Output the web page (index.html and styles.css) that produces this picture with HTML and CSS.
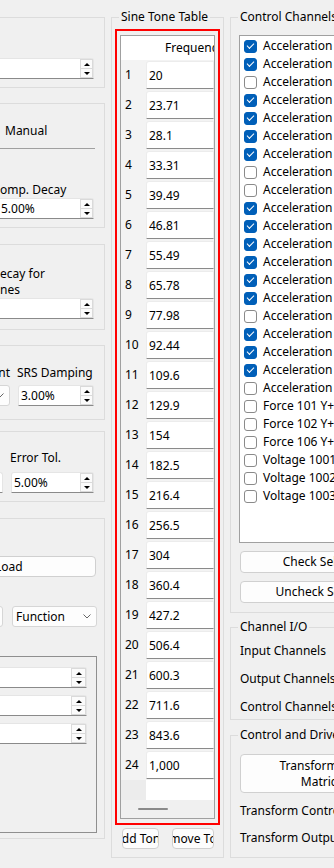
FILE: index.html
```html
<!DOCTYPE html>
<html lang="en">
<head>
    <meta charset="UTF-8">
    <title>Sine Tone Setup</title>
    <link rel="stylesheet" href="styles.css">
</head>
<body>
<div class="window">

    <!-- left column, cut off by the window edge -->
    <div class="col-left">
        <div class="lgroup g1">
            <div class="spin wide">
                <span class="spin-text"></span>
                <span class="spin-btns"><span class="sb up"></span><span class="sb down"></span></span>
            </div>
        </div>

        <div class="lgroup g2">
            <div class="tabline"><span class="tab">Manual</span></div>
            <div class="lbl l-decay">omp. Decay</div>
            <div class="spin wide s-decay">
                <span class="spin-text t-clip">5.00%</span>
                <span class="spin-btns"><span class="sb up"></span><span class="sb down"></span></span>
            </div>
        </div>

        <div class="lgroup g3">
            <div class="lbl l-tones">ecay for<br>nes</div>
            <div class="spin wide s-tones">
                <span class="spin-text"></span>
                <span class="spin-btns"><span class="sb up"></span><span class="sb down"></span></span>
            </div>
        </div>

        <div class="lgroup g4">
            <div class="pair-row l-srs">
                <span class="c1 lbl-r">nt</span>
                <span class="c2 lbl">SRS Damping</span>
            </div>
            <div class="pair-row r-srs">
                <div class="c1 combo"><span class="combo-text"></span><svg class="chev" width="8" height="5" viewBox="0 0 8 5"><path d="M.5 .5 4 4 7.5 .5" stroke="#666" fill="none"/></svg></div>
                <div class="c2 spin">
                    <span class="spin-text">3.00%</span>
                    <span class="spin-btns"><span class="sb up"></span><span class="sb down"></span></span>
                </div>
            </div>
        </div>

        <div class="lgroup g5">
            <div class="pair-row l-err">
                <span class="c1"></span>
                <span class="c2 lbl">Error Tol.</span>
            </div>
            <div class="pair-row r-err">
                <div class="c1 spin"><span class="spin-text"></span></div>
                <div class="c2 spin">
                    <span class="spin-text">5.00%</span>
                    <span class="spin-btns"><span class="sb up"></span><span class="sb down"></span></span>
                </div>
            </div>
        </div>

        <div class="lgroup g6">
            <button class="btn b-load">Load</button>
            <div class="pair-row r-func">
                <div class="c1 combo"><span class="combo-text"></span><svg class="chev" width="8" height="5" viewBox="0 0 8 5"><path d="M.5 .5 4 4 7.5 .5" stroke="#666" fill="none"/></svg></div>
                <div class="c2 combo"><span class="combo-text">Function</span><svg class="chev" width="8" height="5" viewBox="0 0 8 5"><path d="M.5 .5 4 4 7.5 .5" stroke="#666" fill="none"/></svg></div>
            </div>
            <div class="frame">
                <div class="spin fspin"><span class="spin-text"></span><span class="spin-btns"><span class="sb up"></span><span class="sb down"></span></span></div>
                <div class="spin fspin"><span class="spin-text"></span><span class="spin-btns"><span class="sb up"></span><span class="sb down"></span></span></div>
                <div class="spin fspin"><span class="spin-text"></span><span class="spin-btns"><span class="sb up"></span><span class="sb down"></span></span></div>
            </div>
        </div>
    </div>

    <!-- sine tone table -->
    <div class="col-mid">
        <div class="group g-table">
            <div class="group-title">Sine Tone Table</div>
            <div class="highlight">
                <div class="table">
                    <div class="corner"></div>
                    <div class="col-head">Frequency (Hz)</div>
                    <div class="rh">1</div><div class="cell"><span>20</span></div>
                    <div class="rh">2</div><div class="cell"><span>23.71</span></div>
                    <div class="rh">3</div><div class="cell"><span>28.1</span></div>
                    <div class="rh">4</div><div class="cell"><span>33.31</span></div>
                    <div class="rh">5</div><div class="cell"><span>39.49</span></div>
                    <div class="rh">6</div><div class="cell"><span>46.81</span></div>
                    <div class="rh">7</div><div class="cell"><span>55.49</span></div>
                    <div class="rh">8</div><div class="cell"><span>65.78</span></div>
                    <div class="rh">9</div><div class="cell"><span>77.98</span></div>
                    <div class="rh">10</div><div class="cell"><span>92.44</span></div>
                    <div class="rh">11</div><div class="cell"><span>109.6</span></div>
                    <div class="rh">12</div><div class="cell"><span>129.9</span></div>
                    <div class="rh">13</div><div class="cell"><span>154</span></div>
                    <div class="rh">14</div><div class="cell"><span>182.5</span></div>
                    <div class="rh">15</div><div class="cell"><span>216.4</span></div>
                    <div class="rh">16</div><div class="cell"><span>256.5</span></div>
                    <div class="rh">17</div><div class="cell"><span>304</span></div>
                    <div class="rh">18</div><div class="cell"><span>360.4</span></div>
                    <div class="rh">19</div><div class="cell"><span>427.2</span></div>
                    <div class="rh">20</div><div class="cell"><span>506.4</span></div>
                    <div class="rh">21</div><div class="cell"><span>600.3</span></div>
                    <div class="rh">22</div><div class="cell"><span>711.6</span></div>
                    <div class="rh">23</div><div class="cell"><span>843.6</span></div>
                    <div class="rh">24</div><div class="cell"><span>1,000</span></div>
                    <div class="rh empty"></div><div class="blank"></div>
                    <div class="hscroll"><span class="handle"></span></div>
                </div>
            </div>
            <div class="tone-btns">
                <button class="btn b-add"><span>Add Tone</span></button>
                <button class="btn b-remove"><span>Remove Tone</span></button>
            </div>
        </div>
    </div>

    <!-- channels, cut off by the window edge -->
    <div class="col-right">
        <div class="group g-channels">
            <div class="group-title">Control Channels</div>
            <div class="list">
                <div class="item"><span class="cb on"></span>Acceleration 1 X+</div>
                <div class="item"><span class="cb on"></span>Acceleration 1 Y+</div>
                <div class="item"><span class="cb"></span>Acceleration 1 Z+</div>
                <div class="item"><span class="cb on"></span>Acceleration 2 X+</div>
                <div class="item"><span class="cb on"></span>Acceleration 2 Y+</div>
                <div class="item"><span class="cb on"></span>Acceleration 2 Z+</div>
                <div class="item"><span class="cb on"></span>Acceleration 3 X+</div>
                <div class="item"><span class="cb"></span>Acceleration 3 Y+</div>
                <div class="item"><span class="cb"></span>Acceleration 3 Z+</div>
                <div class="item"><span class="cb on"></span>Acceleration 4 X+</div>
                <div class="item"><span class="cb on"></span>Acceleration 4 Y+</div>
                <div class="item"><span class="cb on"></span>Acceleration 4 Z+</div>
                <div class="item"><span class="cb on"></span>Acceleration 5 X+</div>
                <div class="item"><span class="cb on"></span>Acceleration 5 Y+</div>
                <div class="item"><span class="cb on"></span>Acceleration 5 Z+</div>
                <div class="item"><span class="cb"></span>Acceleration 6 X+</div>
                <div class="item"><span class="cb on"></span>Acceleration 6 Y+</div>
                <div class="item"><span class="cb on"></span>Acceleration 6 Z+</div>
                <div class="item"><span class="cb on"></span>Acceleration 7 X+</div>
                <div class="item"><span class="cb"></span>Acceleration 7 Y+</div>
                <div class="item"><span class="cb"></span>Force 101 Y+</div>
                <div class="item"><span class="cb"></span>Force 102 Y+</div>
                <div class="item"><span class="cb"></span>Force 106 Y+</div>
                <div class="item"><span class="cb"></span>Voltage 1001</div>
                <div class="item"><span class="cb"></span>Voltage 1002</div>
                <div class="item"><span class="cb"></span>Voltage 1003</div>
            </div>
            <button class="btn b-wide b-check"><span>Check Selected</span></button>
            <button class="btn b-wide b-uncheck"><span>Uncheck Selected</span></button>
        </div>

        <div class="group g-io">
            <div class="group-title">Channel I/O</div>
            <div class="lbl io-1">Input Channels</div>
            <div class="lbl io-2">Output Channels</div>
            <div class="lbl io-3">Control Channels</div>
        </div>

        <div class="group g-drive">
            <div class="group-title">Control and Drive</div>
            <button class="btn b-wide b-matrix"><span>Transform Drive<br>Matrices</span></button>
            <div class="lbl dr-1">Transform Control</div>
            <div class="lbl dr-2">Transform Output</div>
        </div>
    </div>

</div>
</body>
</html>
```

FILE: styles.css
```css
body {
    margin: 0;
    background-color: #f0f0f0;
    font-family: "Noto Sans", "Open Sans", sans-serif;
    font-size: 12px;
    line-height: 16px;
    color: #000;
}
.window {
    display: flex;
    width: 334px;
    height: 868px;
    overflow: hidden;
}
button {
    font-family: inherit;
    font-size: 12px;
    line-height: 16px;
    color: #000;
}

/* ---------- shared widgets ---------- */
.group {
    border: 1px solid #dcdcdc;
}
.group-title {
    width: fit-content;
    margin: -9px 0 0 7px;
    padding: 0 2px;
    background-color: #f0f0f0;
    white-space: nowrap;
}
.lbl {
    white-space: nowrap;
}
.lbl-r {
    text-align: right;
    white-space: nowrap;
}
.spin {
    display: flex;
    box-sizing: border-box;
    height: 21px;
    background-color: #fff;
    border: 1px solid #e5e5e5;
    border-bottom-color: #8a8a8a;
    border-radius: 3px 3px 0 0;
}
.spin-text {
    flex: 1;
    padding-left: 2px;
    line-height: 19px;
    white-space: nowrap;
    overflow: hidden;
}
.spin-btns {
    display: flex;
    flex-direction: column;
    width: 13px;
}
.sb {
    flex: 1;
    display: flex;
    align-items: center;
    justify-content: center;
    border: 1px solid #dadada;
    background-color: #fbfbfb;
}
.sb + .sb {
    border-top: none;
}
.sb.up::before {
    content: "";
    border-left: 3px solid transparent;
    border-right: 3px solid transparent;
    border-bottom: 3px solid #000;
}
.sb.down::before {
    content: "";
    border-left: 3px solid transparent;
    border-right: 3px solid transparent;
    border-top: 3px solid #000;
}
.combo {
    display: flex;
    align-items: center;
    box-sizing: border-box;
    height: 21px;
    background-color: #fdfdfd;
    border: 1px solid #d6d6d6;
    border-radius: 3px;
}
.combo-text {
    flex: 1;
    padding-left: 3px;
    white-space: nowrap;
}
.chev {
    margin-right: 5px;
}
.btn {
    display: flex;
    justify-content: center;
    align-items: center;
    box-sizing: border-box;
    padding: 0;
    background-color: #fdfdfd;
    border: 1px solid #d0d0d0;
    border-radius: 4px;
    overflow: hidden;
    white-space: nowrap;
}
.btn span {
    flex: none;
}

/* ---------- left column ---------- */
.col-left {
    flex: none;
    width: 105px;
    overflow: hidden;
}
.lgroup {
    box-sizing: border-box;
    width: 146px;
    margin-left: -41px;
    padding-left: 40px;
    border: 1px solid #dcdcdc;
}
.spin.wide {
    margin: 0 10px 0 -20px;
}
.spin.wide .spin-text {
    padding-left: 20px;
}
.g1 {
    margin-top: 17px;
    padding-bottom: 8px;
}
.g1 .spin {
    margin-top: 40px;
}
.g2 {
    margin-top: 15px;
    padding-bottom: 8px;
}
.tabline {
    margin: 19px 9px 0 -20px;
    padding: 0 0 9px 25px;
    border-bottom: 1px solid #a0a0a0;
}
.l-decay {
    margin-top: 33px;
}
.s-decay {
    margin-top: 7px;
}
.spin .t-clip {
    padding-left: 18px;
}
.g3 {
    margin-top: 16px;
    padding-bottom: 10px;
}
.l-tones {
    margin-top: 21px;
}
.s-tones {
    margin-top: 12px;
}
.pair-row {
    display: flex;
    gap: 8px;
}
.pair-row .c1 {
    flex: none;
    width: 40px;
    margin-left: -30px;
}
.pair-row .c2 {
    flex: none;
    width: 76px;
}
.g4 {
    margin-top: 15px;
    padding-bottom: 13px;
}
.l-srs {
    margin-top: 19px;
}
.l-srs .c2 {
    margin-left: -1px;
}
.r-srs {
    margin-top: 4px;
}
.g5 {
    margin-top: 11px;
    padding-bottom: 8px;
}
.l-err {
    margin-top: 18px;
}
.l-err .c1, .r-err .c1 {
    width: 33px;
}
.l-err .c2 {
    width: 83px;
    margin-left: -1px;
}
.r-err {
    margin-top: 6px;
}
.r-err .c2 {
    width: 83px;
}
.g6 {
    margin-top: 16px;
    padding-bottom: 5px;
}
.b-load {
    justify-content: flex-start;
    width: 116px;
    height: 21px;
    margin: 37px 0 0 -20px;
    padding-left: 14px;
}
.r-func {
    margin-top: 29px;
}
.r-func .c1 {
    width: 33px;
}
.r-func .c2 {
    width: 85px;
    margin-left: 1px;
}
.frame {
    box-sizing: border-box;
    height: 177px;
    margin: 29px 7px 0 -20px;
    padding-top: 10px;
    border: 1px solid #8f8f8f;
}
.fspin {
    margin: 0 9px 7px 0;
}
.fspin .spin-btns {
    width: 15px;
}

/* ---------- sine tone table ---------- */
.col-mid {
    flex: none;
    width: 113px;
    margin-left: 6px;
}
.g-table {
    box-sizing: border-box;
    height: 841px;
    margin-top: 17px;
}
.highlight {
    width: 95px;
    margin: 4px 0 0 3px;
    padding: 4px 3px;
    border: 2px solid #ff0000;
}
.table {
    display: grid;
    grid-template-columns: 25px 68px;
    grid-template-rows: 24px repeat(24, 30px) 20px 18px;
    height: 784px;
    box-sizing: border-box;
    border: 1px solid #a0a0a0;
    background-color: #fff;
    overflow: hidden;
}
.corner {
    background-color: #fff;
}
.col-head {
    padding: 4px 0 0 19px;
    white-space: nowrap;
    overflow: hidden;
}
.rh {
    padding: 7px 0 0 4px;
    background-color: #f3f3f3;
}
.rh.empty {
    background-color: #ececec;
}
.cell {
    background-color: #f3f3f3;
    padding-top: 1px;
}
.cell span {
    display: block;
    box-sizing: border-box;
    height: 28px;
    padding: 6px 0 0 2px;
    background-color: #fff;
    border: 1px solid #ececec;
    border-bottom-color: #8a8a8a;
    border-radius: 3px 0 0 0;
}
.blank {
    background-color: #fff;
}
.hscroll {
    grid-column: 1 / 3;
    display: flex;
    align-items: center;
    padding-left: 17px;
    background-color: #f0f0f0;
}
.handle {
    width: 30px;
    height: 2px;
    background-color: #8a8a8a;
    border-radius: 1px;
}
.tone-btns {
    display: flex;
    gap: 13px;
    margin: 3px 0 0 10px;
}
.b-add {
    width: 37px;
    height: 21px;
}
.b-remove {
    width: 42px;
    height: 21px;
}

/* ---------- right column ---------- */
.col-right {
    flex: none;
    width: 200px;
    margin-left: 6px;
}
.col-right .group {
    width: 190px;
    padding: 0 9px;
    box-sizing: border-box;
}
.col-right .group-title {
    margin-left: -2px;
}
.g-channels {
    margin-top: 17px;
    padding-bottom: 9px !important;
}
.list {
    box-sizing: border-box;
    height: 508px;
    margin: 10px 0 0 -1px;
    padding-top: 1px;
    background-color: #fff;
    border: 1px solid #a0a0a0;
}
.item {
    display: flex;
    align-items: center;
    height: 18px;
    white-space: nowrap;
}
.cb {
    flex: none;
    position: relative;
    box-sizing: border-box;
    width: 13px;
    height: 13px;
    margin: 0 6px 0 4px;
    background-color: #fff;
    border: 1px solid #8a8a8a;
    border-radius: 3px;
}
.cb.on {
    background-color: #005fb8;
    border-color: #005fb8;
}
.cb.on::after {
    content: "";
    position: absolute;
    left: 2px;
    top: 2px;
    width: 6px;
    height: 3px;
    border-left: 1px solid #fff;
    border-bottom: 1px solid #fff;
    transform: rotate(-45deg);
}
.b-wide {
    width: 170px;
    height: 22px;
}
.b-check {
    margin-top: 8px;
}
.b-uncheck {
    margin-top: 8px;
}
.g-io {
    margin-top: 14px;
    padding-bottom: 4px !important;
}
.io-1 {
    margin-top: 8px;
}
.io-2, .io-3 {
    margin-top: 12px;
}
.g-drive {
    margin-top: 15px;
    padding-bottom: 11px !important;
}
.b-matrix {
    height: 39px;
    margin-top: 11px;
    text-align: center;
}
.dr-1 {
    margin-top: 10px;
}
.dr-2 {
    margin-top: 11px;
}
```
